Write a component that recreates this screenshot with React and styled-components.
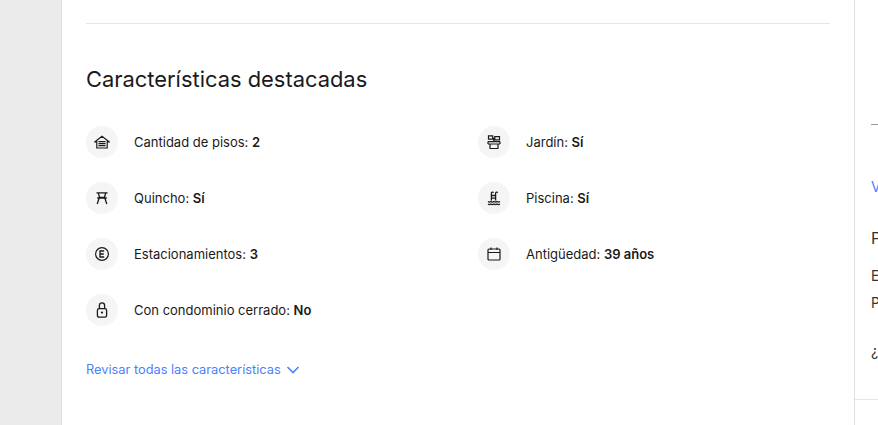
import React from 'react';
import styled, { createGlobalStyle } from 'styled-components';

const GlobalStyle = createGlobalStyle`
  html, body {
    margin: 0;
    height: 100%;
    overflow: hidden;
    background: #ebebeb;
    font-family: "Inter", "Noto Sans", sans-serif;
  }
`;

const Page = styled.div`
  display: flex;
  width: 878px;
  height: 425px;
  overflow: hidden;
`;

const Gutter = styled.div`
  flex: 0 0 61px;
  background: #ebebeb;
`;

const MainPanel = styled.main`
  flex: 0 0 792px;
  box-sizing: border-box;
  padding: 23px 24px 0;
  background: #fff;
  border-left: 1px solid #e0e0e0;
`;

const Divider = styled.hr`
  margin: 0;
  border: 0;
  height: 1px;
  background: #e6e6e6;
`;

const Title = styled.h2`
  margin: 40px 0 0;
  height: 30px;
  font-size: 21.9px;
  line-height: 30px;
  font-weight: 400;
  color: #1a1a1a;
`;

const FeatureGrid = styled.ul`
  display: grid;
  grid-template-columns: 392px 352px;
  row-gap: 24px;
  margin: 32px 0 0;
  padding: 0;
  list-style: none;
`;

const Feature = styled.li`
  display: flex;
  align-items: center;
  gap: 16px;
  height: 32px;
  font-size: 13px;
  color: #1a1a1a;
  b {
    font-weight: 600;
  }
`;

const IconCircle = styled.span`
  display: flex;
  align-items: center;
  justify-content: center;
  width: 32px;
  height: 32px;
  border-radius: 50%;
  background: #f5f5f5;
`;

const MoreLink = styled.a`
  display: flex;
  align-items: center;
  gap: 5px;
  margin-top: 33px;
  height: 20px;
  font-size: 12.8px;
  color: #4d80ff;
  cursor: pointer;
`;

const SideBar = styled.aside`
  flex: 0 0 300px;
  box-sizing: border-box;
  height: 425px;
  padding-top: 124px;
  background: #fff;
  border-left: 1px solid #e0e0e0;
  color: #333;
  white-space: nowrap;
`;

const SideInner = styled.div`
  padding-left: 16px;
`;

const SideRule = styled.div`
  height: 1px;
  background: #999;
`;

const SideLink = styled.div`
  margin-top: 53px;
  height: 18px;
  line-height: 18px;
  font-size: 14px;
  color: #4d80ff;
`;

const SideHeading = styled.div`
  margin-top: 31px;
  height: 22px;
  line-height: 22px;
  font-size: 16px;
`;

const SideText = styled.div`
  margin-top: ${(p) => p.$top}px;
  height: 18px;
  line-height: 18px;
  font-size: 14px;
`;

const SideFooter = styled.div`
  margin-top: 39px;
  height: 1px;
  background: #e6e6e6;
`;

const Svg = ({ children }) => (
  <svg width="16" height="16" viewBox="0 0 16 16" fill="none" stroke="#1a1a1a" strokeWidth="1.2">
    {children}
  </svg>
);

const icons = {
  floors: (
    <Svg>
      <path d="M1 7.8 8 2.2l7 5.6H13.2V14H2.8V7.8z" />
      <path d="M4.5 7.6h7M4.5 9.6h7M4.5 11.6h7" strokeWidth="1.4" />
    </Svg>
  ),
  grill: (
    <Svg>
      <path d="M2.5 2.8h11M4.2 2.8l1.4 4.7h4.8l1.4-4.7M3.2 8h9.6M5.2 8l-2 6M10.8 8l2 6" strokeWidth="1.3" />
    </Svg>
  ),
  parking: (
    <Svg>
      <circle cx="8" cy="8" r="6.4" />
      <path d="M10.2 5H6v6h4.2M6 8h3.8" strokeWidth="1.3" />
    </Svg>
  ),
  lock: (
    <Svg>
      <rect x="3.4" y="6.6" width="9.2" height="8.6" rx="1.8" strokeWidth="1.3" />
      <path d="M5.4 6.6V3.4a2.6 2.6 0 0 1 5.2 0V6.6" strokeWidth="1.3" />
      <circle cx="8" cy="10.6" r="1.1" fill="#1a1a1a" stroke="none" />
    </Svg>
  ),
  garden: (
    <Svg>
      <path d="M2.5 1.8h4.2v3.4H2.5zM8.8 2.6h4.7v3.2H8.8zM6.7 4l2.1.6M7.8 5v2" />
      <path d="M2 7.6h12M2 10h12M4 10v4.5h8V10M2 7.6V10M14 7.6V10" />
    </Svg>
  ),
  pool: (
    <Svg>
      <path d="M5.4 10.5V3.2a1.2 1.2 0 0 1 2.2-.5M9.6 10.5V3.2a1.2 1.2 0 0 1 2.2-.5M5.4 5.5h4.2M5.4 8.2h4.2" strokeWidth="1.3" />
      <path d="M2 11.5c1 .8 2 .8 3 0 1 .8 2 .8 3 0 1 .8 2 .8 3 0 1 .8 2 .8 3 0M2 14c1 .8 2 .8 3 0 1 .8 2 .8 3 0 1 .8 2 .8 3 0 1 .8 2 .8 3 0" strokeWidth="1.1" />
    </Svg>
  ),
  calendar: (
    <Svg>
      <rect x="2" y="3" width="12" height="11" rx="1" />
      <path d="M2 6.5h12M5 1.5V4M11 1.5V4" />
    </Svg>
  ),
};

const features = [
  { icon: 'floors', label: 'Cantidad de pisos', value: '2' },
  { icon: 'garden', label: 'Jardín', value: 'Sí' },
  { icon: 'grill', label: 'Quincho', value: 'Sí' },
  { icon: 'pool', label: 'Piscina', value: 'Sí' },
  { icon: 'parking', label: 'Estacionamientos', value: '3' },
  { icon: 'calendar', label: 'Antigüedad', value: '39 años' },
  { icon: 'lock', label: 'Con condominio cerrado', value: 'No' },
];

export default function App() {
  return (
    <Page>
      <GlobalStyle />
      <Gutter />
      <MainPanel>
        <Divider />
        <Title>Características destacadas</Title>
        <FeatureGrid>
          {features.map((f) => (
            <Feature key={f.label}>
              <IconCircle>{icons[f.icon]}</IconCircle>
              <span>
                {f.label}: <b>{f.value}</b>
              </span>
            </Feature>
          ))}
        </FeatureGrid>
        <MoreLink>
          Revisar todas las características
          <svg width="15" height="15" viewBox="0 0 15 15" fill="none" stroke="#4d80ff" strokeWidth="1.6">
            <path d="M1.5 5l5.5 5.5L12.5 5" />
          </svg>
        </MoreLink>
      </MainPanel>
      <SideBar>
        <SideInner>
          <SideRule />
          <SideLink>Ver</SideLink>
          <SideHeading>Publicar</SideHeading>
          <SideText $top={18}>Email</SideText>
          <SideText $top={9}>Precio</SideText>
          <SideText $top={30}>¿Dudas?</SideText>
        </SideInner>
        <SideFooter />
      </SideBar>
    </Page>
  );
}
